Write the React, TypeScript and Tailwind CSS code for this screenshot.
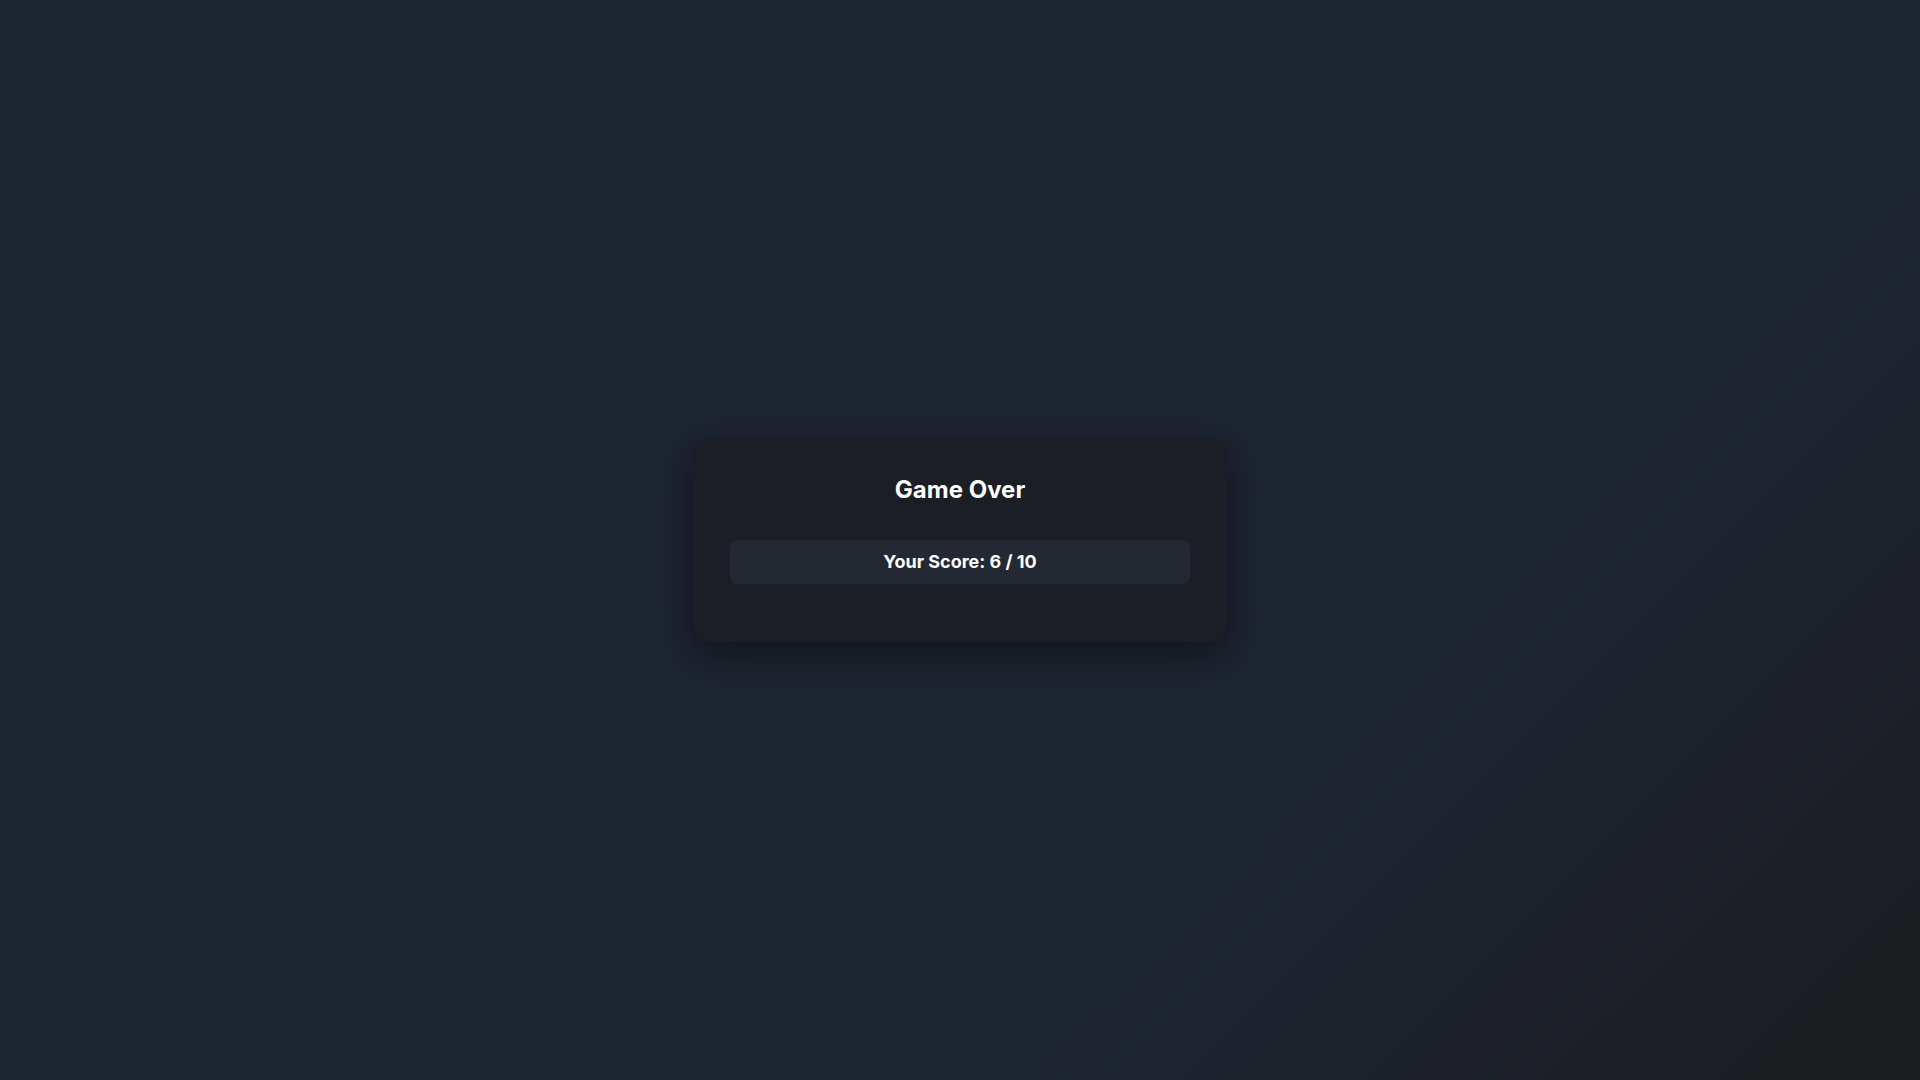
import React from "react";

export default function App() {
  return (
    <div
      className="min-h-screen w-full flex items-center justify-center bg-[linear-gradient(135deg,#1e2533_0%,#1e2533_70%,#1c1d21_95%,#1c1d20_100%)]"
      style={{ fontFamily: "Inter, 'Noto Sans', sans-serif" }}
    >
      <div className="w-[534px] rounded-2xl bg-[#1b1e25] px-[37px] pt-[36px] pb-[58px] shadow-[0_12px_40px_rgba(0,0,0,0.5)] flex flex-col items-center">
        <h1 className="text-2xl leading-8 font-bold text-white">Game Over</h1>
        <div className="mt-[34px] w-full rounded-lg bg-[#232932] py-2 text-center text-lg leading-7 font-bold text-white">
          Your Score: 6 / 10
        </div>
      </div>
    </div>
  );
}
